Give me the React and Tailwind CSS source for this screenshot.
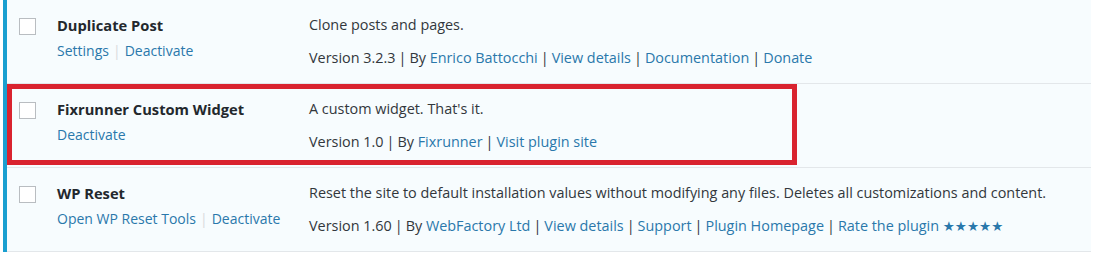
import React from "react";

const LINK = "text-[#2a78ab]";

function Sep() {
  return <span className="text-[#32373c] px-[3px]">|</span>;
}
function ActSep() {
  return <span className="text-[#d7dadc] px-[4px]">|</span>;
}

function Row({ title, actions, desc, meta }) {
  return (
    <div className="flex h-[84px] bg-[#f7fcfe] border-b border-[#e3e7ea]">
      <div className="w-[50px] shrink-0 pl-[12px] pt-[18px]">
        <div className="w-[17px] h-[17px] bg-white border border-[#b9bdc1]" />
      </div>
      <div className="w-[252px] shrink-0 pt-[15px]">
        <div className="text-[14.7px] leading-[20px] font-bold text-[#23282d]">{title}</div>
        <div className="mt-[6px] text-[14px] leading-[20px]">
          {actions.map((a, i) => (
            <React.Fragment key={i}>
              {i > 0 && <ActSep />}
              <span className={LINK}>{a}</span>
            </React.Fragment>
          ))}
        </div>
      </div>
      <div className="flex-1 pt-[15px] text-[14.4px] leading-[20px] text-[#32373c]">
        <div>{desc}</div>
        <div className="mt-[13px] whitespace-nowrap">{meta}</div>
      </div>
    </div>
  );
}

export default function App() {
  return (
    <div
      className="relative w-[1098px] h-[256px] bg-white overflow-hidden"
      style={{ fontFamily: '"Open Sans", "Noto Sans", sans-serif' }}
    >
      <div className="ml-[3px] w-[1088px] border-l-4 border-[#1a9fd0]">
        <Row
          title="Duplicate Post"
          actions={["Settings", "Deactivate"]}
          desc="Clone posts and pages."
          meta={
            <>
              Version 3.2.3<Sep />By <span className={LINK}>Enrico Battocchi</span>
              <Sep />
              <span className={LINK}>View details</span>
              <Sep />
              <span className={LINK}>Documentation</span>
              <Sep />
              <span className={LINK}>Donate</span>
            </>
          }
        />
        <Row
          title="Fixrunner Custom Widget"
          actions={["Deactivate"]}
          desc="A custom widget. That's it."
          meta={
            <>
              Version 1.0<Sep />By <span className={LINK}>Fixrunner</span>
              <Sep />
              <span className={LINK}>Visit plugin site</span>
            </>
          }
        />
        <Row
          title="WP Reset"
          actions={["Open WP Reset Tools", "Deactivate"]}
          desc="Reset the site to default installation values without modifying any files. Deletes all customizations and content."
          meta={
            <>
              Version 1.60<Sep />By <span className={LINK}>WebFactory Ltd</span>
              <Sep />
              <span className={LINK}>View details</span>
              <Sep />
              <span className={LINK}>Support</span>
              <Sep />
              <span className={LINK}>Plugin Homepage</span>
              <Sep />
              <span className={LINK}>Rate the plugin </span>
              <span className={`${LINK} text-[13.5px]`} style={{ fontFamily: '"DejaVu Sans", sans-serif' }}>
                ★★★★★
              </span>
            </>
          }
        />
      </div>
      <div className="absolute left-[7px] top-[84px] w-[790px] h-[81px] border-[5px] border-[#d9232f] pointer-events-none" />
    </div>
  );
}
